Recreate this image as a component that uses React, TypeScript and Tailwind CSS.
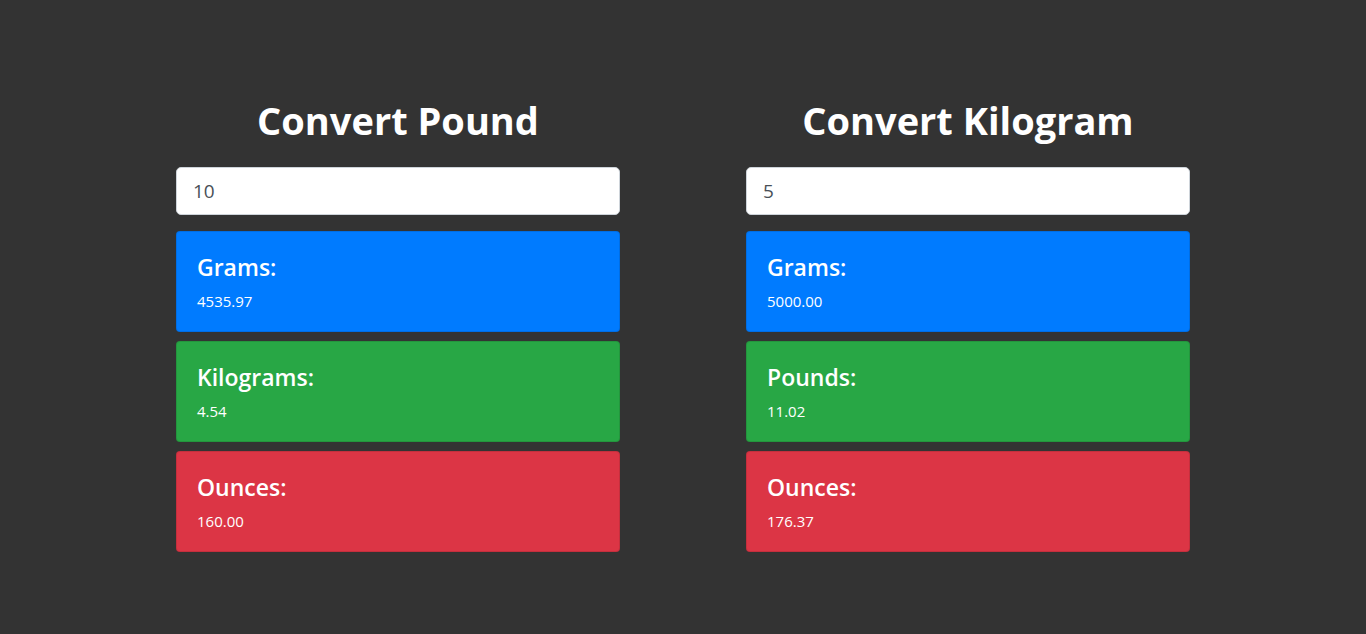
import { useState } from 'react'

const font = { fontFamily: '"Open Sans", "Noto Sans", sans-serif' }

function ResultCard({ label, value, color }: { label: string; value: string; color: string }) {
  return (
    <div className={`${color} rounded-[4px] border border-black/10 px-5 pt-5 pb-[19px] text-white`}>
      <h4 className="mb-2 text-[23px] leading-[30px] font-semibold">{label}</h4>
      <p className="text-[15px] leading-[22px]">{value}</p>
    </div>
  )
}

function Converter({
  title,
  value,
  onChange,
  results,
}: {
  title: string
  value: string
  onChange: (v: string) => void
  results: { label: string; value: string; color: string }[]
}) {
  return (
    <div className="flex justify-center">
      <div className="w-[444px]">
        <h1 className="mb-[23px] text-center text-[38px] leading-[48px] font-bold text-white">{title}</h1>
        <input
          className="mb-4 block h-12 w-full rounded-[5px] border border-[#ced4da] bg-white px-4 text-[19px] text-[#495057] outline-none"
          value={value}
          onChange={(e) => onChange(e.target.value)}
        />
        <div className="flex flex-col gap-[9px]">
          {results.map((r) => (
            <ResultCard key={r.label} {...r} />
          ))}
        </div>
      </div>
    </div>
  )
}

export default function App() {
  const [pounds, setPounds] = useState('10')
  const [kilos, setKilos] = useState('5')

  const lb = parseFloat(pounds) || 0
  const kg = parseFloat(kilos) || 0

  return (
    <div className="min-h-[634px] bg-[#333333] pt-[96px]" style={font}>
      <div className="mx-auto grid w-[1140px] grid-cols-2">
        <Converter
          title="Convert Pound"
          value={pounds}
          onChange={setPounds}
          results={[
            { label: 'Grams:', value: (lb / 0.0022046).toFixed(2), color: 'bg-[#007bff]' },
            { label: 'Kilograms:', value: (lb / 2.2046).toFixed(2), color: 'bg-[#28a745]' },
            { label: 'Ounces:', value: (lb * 16).toFixed(2), color: 'bg-[#dc3545]' },
          ]}
        />
        <Converter
          title="Convert Kilogram"
          value={kilos}
          onChange={setKilos}
          results={[
            { label: 'Grams:', value: (kg * 1000).toFixed(2), color: 'bg-[#007bff]' },
            { label: 'Pounds:', value: (kg * 2.2046).toFixed(2), color: 'bg-[#28a745]' },
            { label: 'Ounces:', value: (kg * 35.274).toFixed(2), color: 'bg-[#dc3545]' },
          ]}
        />
      </div>
    </div>
  )
}
